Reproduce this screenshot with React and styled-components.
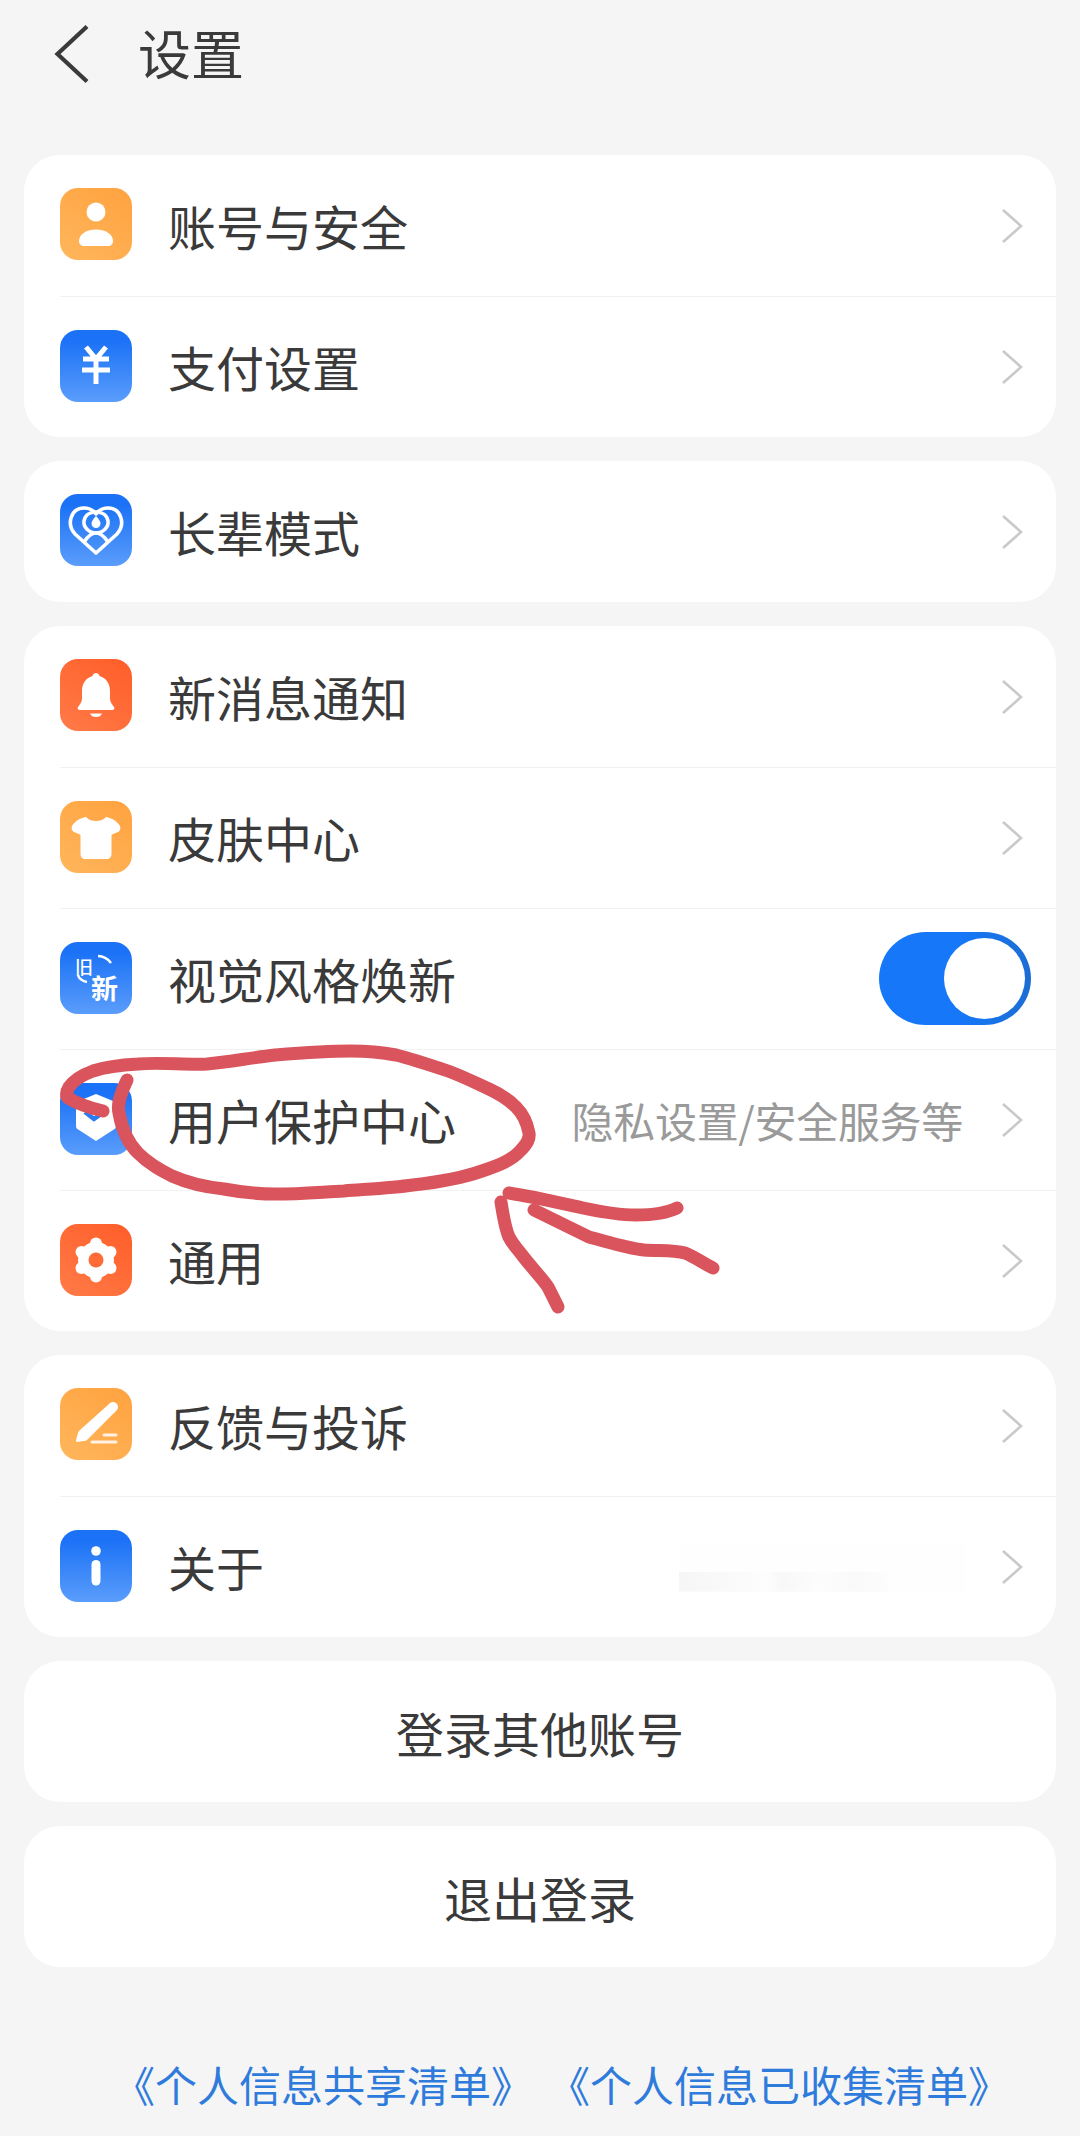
import styled, { createGlobalStyle } from "styled-components";

const GlobalStyle = createGlobalStyle`
  html, body {
    margin: 0;
    padding: 0;
    background: #f5f5f5;
  }
  * {
    box-sizing: border-box;
  }
`;

const tones = {
  amber: "linear-gradient(35deg, #ffb65c, #ffa23f)",
  blue: "linear-gradient(180deg, #1c72f6 15%, #5a9dfb)",
  coral: "linear-gradient(215deg, #ff5d28, #ff7b48)",
};

const Page = styled.div`
  position: relative;
  width: 1080px;
  height: 2136px;
  overflow: hidden;
  background: #f5f5f5;
  color: #3a3a3a;
  font-family: "Noto Sans CJK SC", "Liberation Sans", sans-serif;
`;

const Header = styled.header`
  height: 155px;
  padding: 25px 0 0 54px;
  display: flex;
  align-items: flex-start;
  gap: 48px;
`;

const Title = styled.h1`
  margin: 0;
  height: 54px;
  font-size: 53px;
  line-height: 54px;
  font-weight: 400;
`;

const Groups = styled.main`
  margin: 0 24px;
  display: flex;
  flex-direction: column;
  gap: 24px;
`;

const Card = styled.section`
  background: #fff;
  border-radius: 36px;
  overflow: hidden;
`;

const Row = styled.div`
  height: 141px;
  margin-left: 36px;
  padding-right: 33px;
  display: flex;
  align-items: center;
  border-top: ${(props) => (props.$first ? "none" : "1px solid #f2f2f2")};
`;

const Tile = styled.span`
  flex: none;
  width: 72px;
  height: 72px;
  margin-bottom: 3px;
  border-radius: 18px;
  background: ${(props) => tones[props.$tone]};
  svg {
    display: block;
  }
`;

const Label = styled.span`
  margin-left: 36px;
  margin-bottom: 2px;
  flex: 1;
  font-size: 48px;
  line-height: 60px;
`;

const Value = styled.span`
  margin-right: 38px;
  font-size: 42px;
  line-height: 60px;
  letter-spacing: -0.3px;
  color: #9a9a9a;
`;

const Smudge = styled.span`
  width: 287px;
  height: 49px;
  margin-right: 35px;
  background:
    linear-gradient(90deg, #f6f6f6, #fafafa 20%, #fdfdfd 30%, #f8f8f8 36%, #fdfdfd 50%, #f9f9f9 62%, #fefefe 75%, #fefefe) bottom / 100% 40% no-repeat,
    #fefefe;
`;

const Switch = styled.span`
  width: 152px;
  height: 93px;
  margin-right: -8px;
  margin-bottom: 2px;
  padding: 6px;
  border-radius: 47px;
  display: flex;
  justify-content: flex-end;
  background: linear-gradient(90deg, #1677f8 55%, #1c6dd4);
`;

const Knob = styled.span`
  width: 81px;
  height: 81px;
  border-radius: 50%;
  background: #fff;
`;

const ActionCard = styled(Card)`
  height: 141px;
  display: flex;
  align-items: center;
  justify-content: center;
  font-size: 48px;
`;

const Links = styled.footer`
  margin-top: 87px;
  padding-left: 113px;
  display: flex;
  gap: 15px;
  font-size: 42px;
  line-height: 60px;
  color: #2f7bdb;
`;

const Scribble = styled.svg`
  position: absolute;
  left: 0;
  top: 0;
  pointer-events: none;
`;

const BackIcon = () => (
  <svg width="36" height="60" viewBox="0 0 36 60" fill="none" stroke="#3a3a3a" strokeWidth="4.2">
    <path d="M33 1.5 3.5 29 33 56.5" />
  </svg>
);

const Chevron = () => (
  <svg width="22" height="36" viewBox="0 0 22 36" fill="none" stroke="#c9c9c9" strokeWidth="2.6">
    <path d="M2 2 20 18 2 34" />
  </svg>
);

const Glyph = ({ children }) => (
  <svg width="72" height="72" viewBox="0 0 72 72" fill="#fff">
    {children}
  </svg>
);

const icons = {
  person: (
    <Glyph>
      <circle cx="36" cy="24" r="9.5" />
      <path d="M19 53c0-7 8-11.5 17-11.5S53 46 53 53c0 3-2 5-5 5H24c-3 0-5-2-5-5z" />
    </Glyph>
  ),
  yen: (
    <Glyph>
      <path
        d="M26 17 36 29 46 17M23 29H49M22 40H50M36 29V54"
        fill="none"
        stroke="#fff"
        strokeWidth="5"
      />
    </Glyph>
  ),
  heart: (
    <Glyph>
      <g fill="none" stroke="#fff" strokeWidth="3.6" strokeLinejoin="round">
        <path d="M36 59 15 40C6 30 11 14 24 14c5 0 9 2 12 6 3-4 7-6 12-6 13 0 18 16 9 26z" />
        <path d="M24 27c1-6 6-9 12-9s11 3 12 9c1 6-5 12-12 12s-13-6-12-12z" />
        <path d="M24 48c4-6 8-9 12-9s8 3 12 9" />
      </g>
      <path d="M36 22c3 3 4.5 5.5 4.5 7.5a4.5 4.5 0 0 1-9 0c0-2 1.5-4.5 4.5-7.5z" />
    </Glyph>
  ),
  bell: (
    <Glyph>
      <path d="M36 14c2 0 3 1 3.5 3 7 2 10.5 8 10.5 15v8c0 3 2 5 4 8 1 2 0 3-2 3H20c-2 0-3-1-2-3 2-3 4-5 4-8v-8c0-7 3.5-13 10.5-15 .5-2 1.5-3 3.5-3z" />
      <path d="M30 54.5h12c-1 2.5-3 3.5-6 3.5s-5-1-6-3.5z" />
    </Glyph>
  ),
  shirt: (
    <Glyph>
      <path d="M26 16c3 3 6 4 10 4s7-1 10-4c6 1 11 4 14 9 1 3 0 5-2 6l-5 2c-1 .5-1.5 1-1.5 2v18c0 3-2 5-5 5H25.5c-3 0-5-2-5-5V35c0-1-.5-1.5-1.5-2l-5-2c-2-1-3-3-2-6 3-5 8-8 14-9z" />
    </Glyph>
  ),
  renew: (
    <Glyph>
      <text x="15" y="32" fontSize="18" fontWeight="500" fontFamily="Noto Sans CJK SC">旧</text>
      <text x="31" y="57" fontSize="27" fontWeight="700" fontFamily="Noto Sans CJK SC">新</text>
      <path d="M38 14c5 0 10 3 13 7M18 33c1 4 4 6 9 7" fill="none" stroke="#fff" strokeWidth="2.5" />
    </Glyph>
  ),
  shield: (
    <Glyph>
      <path d="M36 11 53 18c2 1 3 2 3 4v21c0 2-1 3-3 4L36 58 19 47c-2-1-3-2-3-4V22c0-2 1-3 3-4z" />
      <path d="M25 29 34 36 44 29" fill="none" stroke="#2a7cf6" strokeWidth="4.5" />
    </Glyph>
  ),
  gear: (
    <Glyph>
      <circle cx="36" cy="36" r="18" />
      <circle cx="36" cy="19.5" r="6" />
      <circle cx="36" cy="52.5" r="6" />
      <circle cx="21.5" cy="28" r="6" />
      <circle cx="50.5" cy="28" r="6" />
      <circle cx="21.5" cy="44" r="6" />
      <circle cx="50.5" cy="44" r="6" />
      <circle cx="36" cy="36" r="7.5" fill="#ff6b36" />
    </Glyph>
  ),
  pencil: (
    <Glyph>
      <path d="M49 16a5 5 0 0 1 8 6L28 51c-1 1-2 2-4 2l-7 1c-1 0-1-1-1-2l2-7c0-1 1-2 2-3z" />
      <path d="M44 47H56M32 54H56" stroke="#fff" strokeWidth="3" strokeLinecap="round" opacity="0.85" />
    </Glyph>
  ),
  info: (
    <Glyph>
      <circle cx="36" cy="21" r="4.8" />
      <rect x="31.5" y="30" width="9" height="25.5" rx="4.5" />
    </Glyph>
  ),
};

const groups = [
  [
    { label: "账号与安全", icon: "person", tone: "amber" },
    { label: "支付设置", icon: "yen", tone: "blue" },
  ],
  [{ label: "长辈模式", icon: "heart", tone: "blue" }],
  [
    { label: "新消息通知", icon: "bell", tone: "coral" },
    { label: "皮肤中心", icon: "shirt", tone: "amber" },
    { label: "视觉风格焕新", icon: "renew", tone: "blue", toggle: true },
    { label: "用户保护中心", icon: "shield", tone: "blue", value: "隐私设置/安全服务等" },
    { label: "通用", icon: "gear", tone: "coral" },
  ],
  [
    { label: "反馈与投诉", icon: "pencil", tone: "amber" },
    { label: "关于", icon: "info", tone: "blue", smudge: true },
  ],
];

const strokes = [
  "M127 1080C120 1095 117 1105 119 1113C122 1130 128 1143 138 1153C150 1165 162 1171 172 1176C190 1184 205 1187 224 1189C245 1193 260 1194 275 1194C300 1194 322 1192 344 1191C370 1189 392 1188 413 1185C440 1182 462 1178 482 1171C500 1165 512 1160 520 1151C527 1144 530 1139 529 1133C527 1122 522 1113 516 1107C508 1099 500 1094 489 1089C476 1083 462 1076 448 1071C430 1065 412 1059 396 1055C380 1052 365 1051 351 1051C325 1051 300 1053 275 1055C250 1058 228 1062 207 1064C185 1065 160 1062 138 1064C120 1065 105 1067 93 1071C82 1075 74 1080 69 1087C66 1092 66 1096 68 1098C78 1104 90 1108 103 1111",
  "M509 1193C535 1197 560 1203 583 1208C602 1212 620 1215 636 1215C652 1215 667 1213 677 1208",
  "M501 1202C503 1215 505 1228 509 1237C513 1245 517 1248 522 1255C532 1268 542 1278 548 1287C552 1295 555 1301 558 1307",
  "M534 1210C552 1219 571 1228 589 1237C608 1242 626 1248 644 1250C660 1251 674 1250 685 1253C695 1257 703 1263 713 1268",
];

export default function App() {
  return (
    <Page>
      <GlobalStyle />
      <Header>
        <BackIcon />
        <Title>设置</Title>
      </Header>
      <Groups>
        {groups.map((rows, index) => (
          <Card key={index}>
            {rows.map((row, rowIndex) => (
              <Row key={row.label} $first={rowIndex === 0}>
                <Tile $tone={row.tone}>{icons[row.icon]}</Tile>
                <Label>{row.label}</Label>
                {row.value && <Value>{row.value}</Value>}
                {row.smudge && <Smudge />}
                {row.toggle ? (
                  <Switch>
                    <Knob />
                  </Switch>
                ) : (
                  <Chevron />
                )}
              </Row>
            ))}
          </Card>
        ))}
        <ActionCard>登录其他账号</ActionCard>
        <ActionCard>退出登录</ActionCard>
      </Groups>
      <Links>
        <span>《个人信息共享清单》</span>
        <span>《个人信息已收集清单》</span>
      </Links>
      <Scribble width="1080" height="2136" viewBox="0 0 1080 2136" fill="none" stroke="#d9545c" strokeWidth="13" strokeLinecap="round" strokeLinejoin="round">
        {strokes.map((d) => (
          <path key={d} d={d} />
        ))}
      </Scribble>
    </Page>
  );
}
